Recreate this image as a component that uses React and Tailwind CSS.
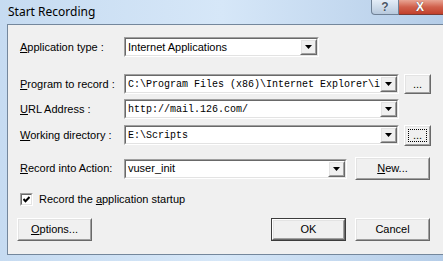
import React from "react";

const UI = { fontFamily: '"Liberation Sans", Arial, sans-serif' };
const MONO = { fontFamily: '"Liberation Mono", "Courier New", monospace' };

const Arrow = () => (
  <svg width="7" height="4" viewBox="0 0 7 4">
    <polygon points="0,0 7,0 3.5,4" fill="#000" />
  </svg>
);

const DropBtn = () => (
  <div className="w-[17px] h-full border border-t-white border-l-white border-b-[#696969] border-r-[#696969]">
    <div className="h-full flex items-center justify-center bg-[#f0f0f0] border border-t-[#e3e3e3] border-l-[#e3e3e3] border-b-[#a0a0a0] border-r-[#a0a0a0]">
      <Arrow />
    </div>
  </div>
);

const Combo = ({ w, children, mono }) => (
  <div className={`${w} h-[20px] border border-t-[#a0a0a0] border-l-[#a0a0a0] border-b-white border-r-white`}>
    <div className="h-full flex bg-white border border-t-[#696969] border-l-[#696969] border-b-[#e3e3e3] border-r-[#e3e3e3]">
      <div
        className={`flex-1 min-w-0 overflow-hidden whitespace-nowrap flex items-center pl-[2px] text-black ${mono ? "text-[10px]" : "text-[11px]"}`}
        style={mono ? MONO : UI}
      >
        {children}
      </div>
      <DropBtn />
    </div>
  </div>
);

const Btn = ({ w, h = "h-[23px]", children, def, focus }) => (
  <div className={`${w} ${h} ${def ? "border border-[#3c3c3c]" : ""}`}>
    <div className="h-full border border-t-white border-l-white border-b-[#696969] border-r-[#696969]">
      <div className="h-full bg-[#f0f0f0] border border-t-[#e3e3e3] border-l-[#e3e3e3] border-b-[#a0a0a0] border-r-[#a0a0a0] flex items-center justify-center">
        <div
          className={`text-[11px] text-black leading-none flex items-center justify-center ${focus ? "border border-dotted border-black w-[calc(100%-4px)] h-[calc(100%-4px)]" : ""}`}
          style={UI}
        >
          {children}
        </div>
      </div>
    </div>
  </div>
);

const Label = ({ k, rest }) => (
  <div className="w-[104px] text-[11px] text-black whitespace-nowrap" style={UI}>
    <span className="underline">{k}</span>
    {rest}
  </div>
);

export default function App() {
  return (
    <div className="w-[443px] h-[261px] overflow-hidden flex flex-col bg-gradient-to-r from-[#c6dbf1] via-[#d6e7f8] to-[#b5cde8]">
      {/* title bar */}
      <div className="h-[24px] flex shrink-0">
        <div className="pl-[8px] pt-[3px] text-[12px] text-black" style={{ fontFamily: '"Noto Sans", "Open Sans", sans-serif' }}>
          Start Recording
        </div>
        <div className="ml-auto flex h-[15px]">
          <div className="w-[28px] h-full rounded-bl-[4px] border border-t-0 border-[#6f8196] bg-gradient-to-b from-[#e4edf7] to-[#b7c9dd] flex items-center justify-center">
            <span className="text-[12px] font-bold text-[#4a5565] leading-none [text-shadow:0_0_1px_#fff]" style={UI}>?</span>
          </div>
          <div className="w-[44px] h-full border-b border-[#7a3a33] bg-gradient-to-b from-[#e8a494] via-[#d0604c] to-[#c23f2b] flex items-center justify-center pr-[2px]">
            <span className="text-[12px] font-bold text-white leading-none [text-shadow:0_0_1px_#333]" style={UI}>X</span>
          </div>
        </div>
      </div>

      {/* body */}
      <div className="flex-1 flex pl-[7px] pb-[6px]">
        <div className="flex-1 bg-[#f0f0f0] border border-r-0 border-[#74879c] pl-[12px] pt-[12px] flex flex-col">
          <div className="flex items-center h-[20px]">
            <Label k="A" rest="pplication type :" />
            <Combo w="w-[195px]">Internet Applications</Combo>
          </div>

          <div className="flex items-center h-[20px] mt-[17px]">
            <Label k="P" rest="rogram to record :" />
            <Combo w="w-[275px]" mono>{"C:\\Program Files (x86)\\Internet Explorer\\i"}</Combo>
            <div className="ml-[5px]"><Btn w="w-[27px]" h="h-[20px]">...</Btn></div>
          </div>

          <div className="flex items-center h-[20px] mt-[5px]">
            <Label k="U" rest="RL Address :" />
            <Combo w="w-[275px]" mono>http://mail.126.com/</Combo>
          </div>

          <div className="flex items-center h-[20px] mt-[6px]">
            <Label k="W" rest="orking directory :" />
            <Combo w="w-[275px]" mono>{"E:\\Scripts"}</Combo>
            <div className="ml-[5px]"><Btn w="w-[27px]" h="h-[21px]" focus>...</Btn></div>
          </div>

          <div className="flex items-center h-[23px] mt-[12px]">
            <Label k="R" rest="ecord into Action:" />
            <Combo w="w-[223px]">vuser_init</Combo>
            <div className="ml-[8px]">
              <Btn w="w-[75px]"><span className="underline">N</span>ew...</Btn>
            </div>
          </div>

          <div className="flex items-center h-[13px] mt-[13px]">
            <div className="w-[13px] h-[13px] border border-t-[#a0a0a0] border-l-[#a0a0a0] border-b-white border-r-white">
              <div className="h-full bg-white border border-t-[#696969] border-l-[#696969] border-b-[#e3e3e3] border-r-[#e3e3e3] flex items-center justify-center">
                <svg width="7" height="7" viewBox="0 0 7 7">
                  <polyline points="0.5,3 2.5,5.2 6.5,1" fill="none" stroke="#000" strokeWidth="2" />
                </svg>
              </div>
            </div>
            <div className="ml-[6px] text-[11px] text-black whitespace-nowrap" style={UI}>
              Record the <span className="underline">a</span>pplication startup
            </div>
          </div>

          <div className="flex h-[23px] mt-[12px] -ml-[3px]">
            <Btn w="w-[75px]"><span className="underline">O</span>ptions...</Btn>
            <div className="ml-[179px]"><Btn w="w-[75px]" def>OK</Btn></div>
            <div className="ml-[9px]"><Btn w="w-[75px]">Cancel</Btn></div>
          </div>
        </div>
      </div>
    </div>
  );
}
